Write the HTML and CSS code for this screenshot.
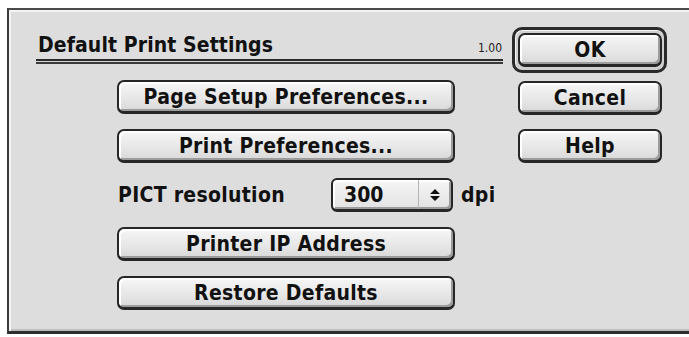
FILE: index.html
```html
<!DOCTYPE html>
<html>
<head>
<meta charset="utf-8">
<link rel="stylesheet" href="styles.css">
</head>
<body>
<div class="dialog">
  <div class="main">
    <div class="header">
      <span class="title">Default Print Settings</span>
      <span class="version">1.00</span>
    </div>
    <div class="rule"></div>
    <div class="controls">
      <div class="btn wide">Page Setup Preferences...</div>
      <div class="btn wide">Print Preferences...</div>
      <div class="row">
        <span class="label">PICT resolution</span>
        <div class="popup">
          <span class="popup-value">300</span>
          <span class="popup-arrows">
            <svg width="10" height="12" viewBox="0 0 10 12"><path d="M5 0 L10 5 L0 5 Z M0 7 L10 7 L5 12 Z" fill="#111"/></svg>
          </span>
        </div>
        <span class="unit">dpi</span>
      </div>
      <div class="btn wide">Printer IP Address</div>
      <div class="btn wide">Restore Defaults</div>
    </div>
  </div>
  <div class="side">
    <div class="default-ring"><div class="btn side-btn">OK</div></div>
    <div class="btn side-btn">Cancel</div>
    <div class="btn side-btn">Help</div>
  </div>
</div>
</body>
</html>
```
FILE: styles.css
```css
html, body {
  margin: 0;
  padding: 0;
  background: #ffffff;
  overflow: hidden;
}
body {
  width: 689px;
  height: 337px;
  font-family: "DejaVu Sans", "Liberation Sans", sans-serif;
  font-stretch: condensed;
  font-weight: bold;
  color: #111111;
}
.dialog {
  box-sizing: border-box;
  margin: 8px 0 0 7px;
  width: 700px;
  height: 326px;
  background: #dddddd;
  border-left: 2px solid #3c3c3c;
  border-top: 2px solid #4a4a4a;
  border-bottom: 3px solid #2e2e2e;
  box-shadow: inset 2px 2px 0 #f3f3f3, inset 0 -2px 0 #bdbdbd;
  display: flex;
  align-items: flex-start;
}
.main {
  width: 467px;
  margin-left: 27px;
  margin-top: 21px;
}
.header {
  height: 28px;
  display: flex;
  justify-content: space-between;
  align-items: flex-end;
}
.title {
  font-size: 21px;
  line-height: 24px;
  letter-spacing: 0.1px;
  padding-left: 2px;
  margin-bottom: 2px;
}
.version {
  font-family: "DejaVu Sans", sans-serif;
  font-weight: normal;
  font-size: 12px;
  line-height: 14px;
  margin-right: 1px;
  margin-bottom: 4px;
  color: #222;
}
.rule {
  height: 1px;
  border-top: 2px solid #2a2a2a;
  border-bottom: 2px solid #3a3a3a;
  background: #d6d6d6;
}
.controls {
  margin-top: 16px;
  margin-left: 81px;
  display: flex;
  flex-direction: column;
  gap: 15px;
}
.btn {
  box-sizing: border-box;
  height: 34px;
  border: 2px solid #262626;
  border-bottom-width: 3px;
  border-radius: 7px;
  background: linear-gradient(#f6f6f6, #e6e6e6 60%, #d8d8d8);
  box-shadow: inset 2px 2px 0 #ffffff, inset -2px -2px 0 #9c9c9c;
  display: flex;
  align-items: center;
  justify-content: center;
  font-size: 21px;
  letter-spacing: 0.3px;
  line-height: 24px;
}
.wide {
  width: 338px;
}
.row {
  height: 34px;
  display: flex;
  align-items: center;
}
.label {
  font-size: 21px;
  width: 213px;
  padding-left: 1px;
  letter-spacing: 0.3px;
}
.popup {
  box-sizing: border-box;
  width: 122px;
  height: 34px;
  border: 2px solid #262626;
  border-bottom-width: 3px;
  border-radius: 6px;
  background: linear-gradient(#f6f6f6, #e2e2e2);
  box-shadow: inset 2px 2px 0 #ffffff, inset -2px -2px 0 #9c9c9c;
  display: flex;
  align-items: stretch;
}
.popup-value {
  flex: 1;
  display: flex;
  align-items: center;
  padding-left: 11px;
  font-size: 21px;
}
.popup-arrows {
  width: 32px;
  border-left: 1px solid #b4b4b4;
  display: flex;
  align-items: center;
  justify-content: center;
}
.unit {
  margin-left: 8px;
  font-size: 21px;
  letter-spacing: 0.3px;
}
.side {
  margin-left: 9px;
  margin-top: 17px;
  display: flex;
  flex-direction: column;
  align-items: flex-start;
  gap: 14px;
}
.default-ring {
  box-sizing: border-box;
  width: 155px;
  height: 46px;
  border: 3px solid #2a2a2a;
  border-radius: 10px;
  background: #cfcfcf;
  box-shadow: inset 1px 1px 0 #f4f4f4;
  padding: 3px 0 0 3px;
  margin-bottom: -6px;
}
.side-btn {
  width: 144px;
  margin-left: 6px;
}
.default-ring .side-btn {
  margin-left: 0;
}
```
